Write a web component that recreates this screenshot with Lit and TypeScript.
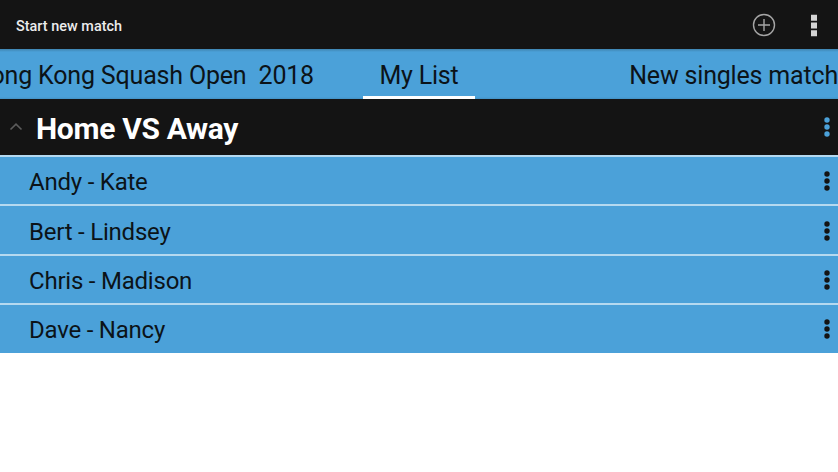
import { LitElement, html, css, svg } from "lit";
import { customElement } from "lit/decorators.js";

@customElement("app-root")
export class AppRoot extends LitElement {
  static styles = css`
    :host { display: block; width: 838px; height: 472px; overflow: hidden; background: #fff; font-family: Roboto, "Liberation Sans", sans-serif; color: #0b1318; }
    * { box-sizing: border-box; }
    svg { display: block; flex: none; }
    header { height: 49px; background: #141414; color: #ececec; display: flex; align-items: center; padding: 1px 17px 0 16px; }
    h1 { margin: 0; flex: 1; padding-top: 3px; font-size: 14.4px; font-weight: 500; letter-spacing: 0.03px; }
    .actions { display: flex; gap: 31px; align-items: center; }
    nav { height: 50px; background: linear-gradient(#3f84b0, #4ba1d9 3px, #4ba1d9 48px, #4391c4 50px); display: grid; grid-template-columns: 363px 112px 363px; overflow: hidden; }
    .tab { font-size: 25px; line-height: 54px; letter-spacing: -0.18px; white-space: pre; height: 50px; }
    .prev { display: flex; justify-content: flex-end; padding-right: 49px; }
    .current { text-align: center; border-bottom: 3px solid #fff; }
    .next { display: flex; justify-content: flex-end; }
    .group { height: 56px; background: #141414; color: #fff; display: flex; align-items: center; padding: 0 7px 0 9px; }
    h2 { margin: 0; flex: 1; padding: 3px 0 0 13px; font-size: 30px; font-weight: 700; letter-spacing: -0.32px; }
    ul { margin: 0; padding: 0; list-style: none; background: #4ba1d9; height: 198px; }
    li { height: 49.4px; display: flex; align-items: center; justify-content: space-between; padding: 1px 7px 0 29px; border-top: 2px solid #b5d9f0; font-size: 24px; letter-spacing: -0.22px; }
    li span { padding-top: 2px; }
  `;
  private dots(color: string) {
    return html`<svg width="8" height="20" viewBox="0 0 8 20" fill=${color}>${[3, 10, 17].map((y) => svg`<circle cx="4" cy=${y} r="2.7"/>`)}</svg>`;
  }
  render() {
    return html`
      <header>
        <h1>Start new match</h1>
        <div class="actions">
          <svg width="24" height="24" viewBox="0 0 24 24" fill="none" stroke="#a5a5a5" stroke-width="1.4"><circle cx="12" cy="12" r="10.5"/><path d="M12 6v12M6 12h12"/></svg>
          <svg width="14" height="24" viewBox="0 0 14 24" fill="#d4d4d4"><path d="M4 1.700h6v6H4zM4 9.500h6v6H4zM4 17.200h6v6H4z"/></svg>
        </div>
      </header>
      <nav>
        <div class="tab prev"><span>Hong Kong Squash Open  2018</span></div>
        <div class="tab current"><span>My List</span></div>
        <div class="tab next"><span>New singles match</span></div>
      </nav>
      <div class="group">
        <svg width="14" height="10" viewBox="0 0 14 10" fill="none" stroke="#5c5c5c" stroke-width="1.6"><path d="M1.500 7.500L7 2.200l5.500 5.300"/></svg>
        <h2>Home VS Away</h2>
        ${this.dots("#4ba1d9")}
      </div>
      <ul>
        ${["Andy - Kate", "Bert - Lindsey", "Chris - Madison", "Dave - Nancy"].map((n) => html`<li><span>${n}</span>${this.dots("#141414")}</li>`)}
      </ul>`;
  }
}
